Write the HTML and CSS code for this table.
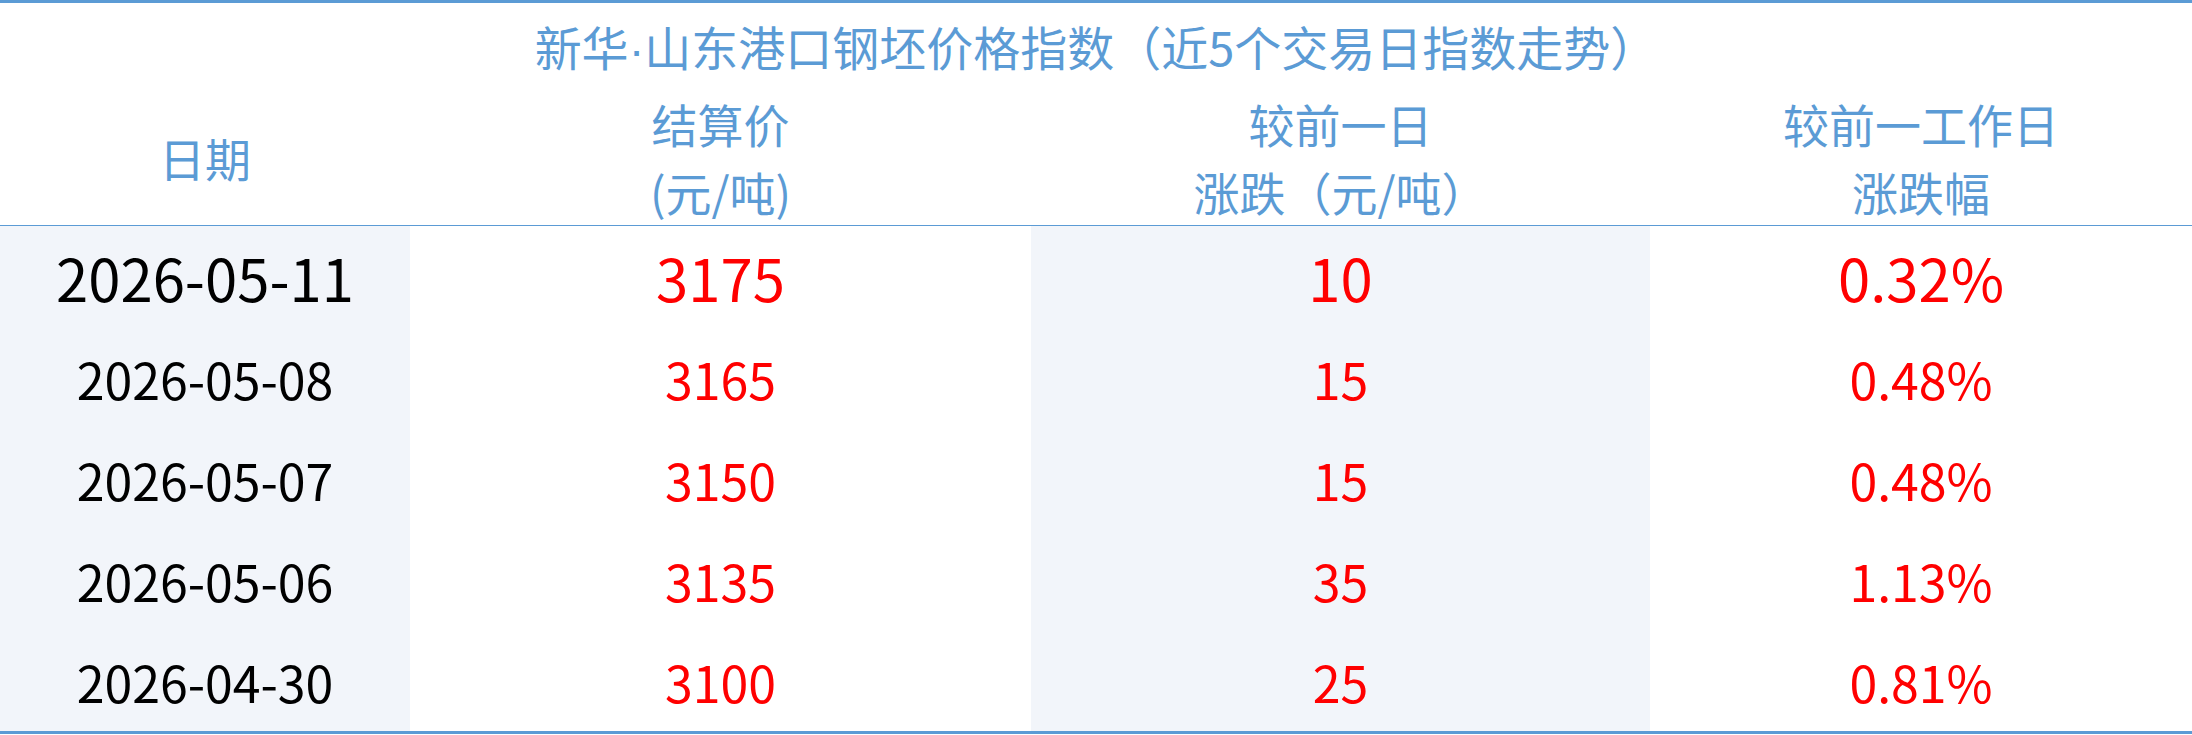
FILE: index.html
```html
<!DOCTYPE html>
<html lang="zh-CN">
<head>
<meta charset="utf-8">
<title>新华·山东港口钢坯价格指数</title>
<link rel="stylesheet" href="styles.css">
</head>
<body>
<div class="sheet">
  <div class="title">新华<span class="dot">·</span>山东港口钢坯价格指数（近5个交易日指数走势）</div>
  <div class="row head">
    <div class="cell"><span>日期</span></div>
    <div class="cell"><span>结算价</span><span>(元/吨)</span></div>
    <div class="cell"><span>较前一日</span><span>涨跌（元/吨）</span></div>
    <div class="cell"><span>较前一工作日</span><span>涨跌幅</span></div>
  </div>
  <div class="row data lead">
    <div class="cell date">2026-05-11</div>
    <div class="cell">3175</div>
    <div class="cell">10</div>
    <div class="cell">0.32%</div>
  </div>
  <div class="row data">
    <div class="cell date">2026-05-08</div>
    <div class="cell">3165</div>
    <div class="cell">15</div>
    <div class="cell">0.48%</div>
  </div>
  <div class="row data">
    <div class="cell date">2026-05-07</div>
    <div class="cell">3150</div>
    <div class="cell">15</div>
    <div class="cell">0.48%</div>
  </div>
  <div class="row data">
    <div class="cell date">2026-05-06</div>
    <div class="cell">3135</div>
    <div class="cell">35</div>
    <div class="cell">1.13%</div>
  </div>
  <div class="row data">
    <div class="cell date">2026-04-30</div>
    <div class="cell">3100</div>
    <div class="cell">25</div>
    <div class="cell">0.81%</div>
  </div>
</div>
</body>
</html>
```
FILE: styles.css
```css
html, body {
  margin: 0;
  padding: 0;
  background: #ffffff;
}

body {
  font-family: "Noto Sans CJK SC", "Noto Sans", sans-serif;
}

.sheet {
  width: 2192px;
  border-top: 3px solid #5b9bd5;
  border-bottom: 3px solid #5b9bd5;
}

.title {
  box-sizing: border-box;
  height: 82px;
  padding-top: 4px;
  line-height: 78px;
  font-size: 47px;
  color: #5b9bd5;
  text-align: center;
  white-space: nowrap;
}

.title .dot {
  font-family: "Liberation Sans", sans-serif;
}

.row {
  display: grid;
  grid-template-columns: 410px 621px 619px 1fr;
}

.head {
  height: 140px;
  border-bottom: 1px solid #5b9bd5;
  color: #5b9bd5;
  font-size: 46px;
}

.head .cell {
  box-sizing: border-box;
  display: flex;
  flex-direction: column;
  justify-content: center;
  align-items: center;
  padding-top: 4px;
  line-height: 68px;
  white-space: nowrap;
}

.data {
  height: 101px;
}

.data .cell {
  display: flex;
  align-items: center;
  justify-content: center;
  font-size: 50px;
  color: #ff0000;
}

.data .cell:nth-child(odd) {
  background: #f2f5fa;
}

.data .date {
  color: #000000;
}

.lead .cell {
  font-size: 58px;
}
```
